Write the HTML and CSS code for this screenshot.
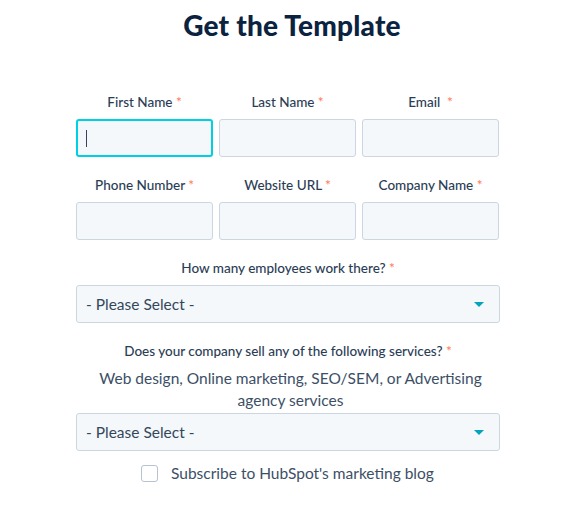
FILE: index.html
```html
<!DOCTYPE html>
<html>
<head>
<meta charset="utf-8">
<link rel="stylesheet" href="styles.css">
</head>
<body>
<div class="page">
  <h1 class="title">Get the Template</h1>
  <form class="form">
    <div class="grid">
      <div class="field">
        <label class="label">First Name <span class="req">*</span></label>
        <div class="input focus"><span class="caret"></span></div>
      </div>
      <div class="field">
        <label class="label">Last Name <span class="req">*</span></label>
        <div class="input"></div>
      </div>
      <div class="field">
        <label class="label">Email&nbsp; <span class="req">*</span></label>
        <div class="input"></div>
      </div>
      <div class="field">
        <label class="label">Phone Number <span class="req">*</span></label>
        <div class="input"></div>
      </div>
      <div class="field">
        <label class="label">Website URL <span class="req">*</span></label>
        <div class="input"></div>
      </div>
      <div class="field">
        <label class="label">Company Name <span class="req">*</span></label>
        <div class="input"></div>
      </div>
    </div>
    <div class="field wide">
      <label class="label">How many employees work there? <span class="req">*</span></label>
      <div class="select"><span>- Please Select -</span><span class="arrow"></span></div>
    </div>
    <div class="field wide second">
      <label class="label">Does your company sell any of the following services? <span class="req">*</span></label>
      <p class="desc">Web design, Online marketing, SEO/SEM, or Advertising agency services</p>
      <div class="select"><span>- Please Select -</span><span class="arrow"></span></div>
    </div>
    <div class="check">
      <span class="box"></span>
      <span class="check-text">Subscribe to HubSpot's marketing blog</span>
    </div>
  </form>
</div>
</body>
</html>
```

FILE: styles.css
```css
* { box-sizing: border-box; }
html, body { margin: 0; padding: 0; background: #fff; }
body { font-family: Lato, "Open Sans", sans-serif; color: #33475b; }
.page { width: 580px; padding-top: 7px; }
.title {
  margin: 0;
  text-align: center;
  font-size: 28px;
  font-weight: 900;
  color: #0b2340;
  line-height: 36px;
  letter-spacing: 0.2px;
  padding-left: 4px;
}
.form { width: 424px; margin: 51px 0 0 76px; }
.grid {
  display: grid;
  grid-template-columns: 137px 137px 137px;
  column-gap: 6px;
  row-gap: 20px;
}
.field { display: flex; flex-direction: column; align-items: stretch; }
.label {
  display: block;
  text-align: center;
  font-size: 13.5px;
  line-height: 17px;
  font-weight: 500;
  color: #2b3d55;
  margin-bottom: 8px;
}
.req { color: #ff7a59; }
.input {
  height: 38px;
  background: #f5f8fa;
  border: 1px solid #cbd6e2;
  border-radius: 3px;
  display: flex;
  align-items: center;
  padding-left: 9px;
}
.input.focus { border: 2px solid #00d0e4; padding-left: 8px; }
.caret { width: 1px; height: 17px; background: #33475b; }
.wide { margin-top: 20px; }
.wide .label { margin-bottom: 8px; }
.second { margin-top: 20px; }
.second .label { margin-bottom: 7px; }
.desc {
  margin: 0 0 2px;
  text-align: center;
  font-size: 15.5px;
  line-height: 22px;
  color: #3c4f66;
  padding: 0 0 0 5px;
}
.select {
  height: 38px;
  background: #f5f8fa;
  border: 1px solid #cbd6e2;
  border-radius: 3px;
  display: flex;
  align-items: center;
  justify-content: space-between;
  padding: 0 15px 0 9px;
  font-size: 15.5px;
  color: #33475b;
}
.arrow {
  width: 0; height: 0;
  border-left: 5px solid transparent;
  border-right: 5px solid transparent;
  border-top: 5px solid #00a4bd;
}
.check {
  display: flex;
  align-items: center;
  margin: 13px 0 0 65px;
}
.box {
  width: 17px; height: 17px;
  border: 1px solid #b5c3d3;
  border-radius: 3px;
  background: #fff;
  margin-right: 13px;
}
.check-text { font-size: 15.5px; color: #3c4f66; }
```
